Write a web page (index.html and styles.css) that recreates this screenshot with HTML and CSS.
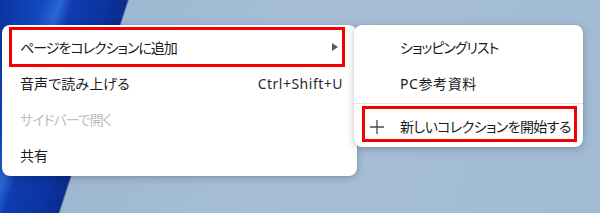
FILE: index.html
```html
<!DOCTYPE html>
<html lang="ja">
<head>
<meta charset="utf-8">
<link rel="stylesheet" href="styles.css">
</head>
<body>
<div class="stage">
  <div class="menu main">
    <div class="item hl-main">
      <span class="label kana">ページをコレクションに追加</span>
      <svg class="arrow" width="6" height="8" viewBox="0 0 6 8"><path d="M0 0 L6 4 L0 8 Z" fill="#5a5a5a"/></svg>
    </div>
    <div class="item">
      <span class="label">音声で読み上げる</span>
      <span class="shortcut">Ctrl+Shift+U</span>
    </div>
    <div class="item disabled">
      <span class="label kana">サイドバーで開く</span>
    </div>
    <div class="item">
      <span class="label">共有</span>
    </div>
  </div>
  <div class="menu sub">
    <div class="sitem">
      <span class="label kana">ショッピングリスト</span>
    </div>
    <div class="sitem">
      <span class="label wide">PC参考資料</span>
    </div>
    <div class="sep"></div>
    <div class="sitem hl-sub">
      <svg class="plus" width="16" height="16" viewBox="0 0 16 16"><path d="M8 1 V15 M1 8 H15" stroke="#4a4a4a" stroke-width="1.3" fill="none"/></svg>
      <span class="label semi">新しいコレクションを開始する</span>
    </div>
  </div>
</div>
</body>
</html>
```

FILE: styles.css
```css
html, body {
  margin: 0;
  padding: 0;
}
body {
  width: 600px;
  height: 213px;
  overflow: hidden;
  background: linear-gradient(108deg,
    #0a33a0 0px, #1248c0 40px, #2a66d6 58px, #0f3cae 70px,
    #0b35a4 100px, #0a2c8c 121px, #9fb8d2 123px, #a6bfd7 300px, #a2bbd4 100%);
  font-family: "Noto Sans", "Noto Sans CJK JP", sans-serif;
  font-size: 14px;
  color: #1b1b1b;
}
.stage {
  display: flex;
  align-items: flex-start;
  padding: 25px 0 0 2px;
}
.menu {
  background: #ffffff;
  border-radius: 8px;
  box-shadow: 0 2px 8px rgba(0, 0, 0, 0.22), 0 0 1px rgba(0, 0, 0, 0.25);
}
.main {
  width: 355px;
  padding: 4px 0 3px;
}
.sub {
  position: relative;
  z-index: 2;
  width: 229px;
  margin-left: -3px;
  padding: 4px 0 3px;
}
.label {
  font-feature-settings: "palt" 1;
  letter-spacing: 0.1px;
  white-space: nowrap;
}
.label.kana {
  letter-spacing: -1px;
}
.label.semi {
  letter-spacing: -0.6px;
}
.label.wide {
  letter-spacing: 0.6px;
}
.item {
  position: relative;
  height: 36px;
  display: flex;
  align-items: center;
  padding: 0 14px 0 18px;
}
.item .label {
  flex: 1;
}
.arrow {
  margin-right: 5px;
}
.shortcut {
  color: #2a2a2a;
  letter-spacing: 0.5px;
}
.disabled {
  color: #bdbdbd;
}
.sitem {
  position: relative;
  height: 36px;
  display: flex;
  align-items: center;
  padding-left: 46px;
}
.plus {
  position: absolute;
  left: 15px;
  top: 11px;
}
.sep {
  height: 1px;
  background: #e5e5e5;
  margin: 2px 0 4px;
}
.hl-main::after,
.hl-sub::after {
  content: "";
  position: absolute;
  border: 3px solid #f00000;
  pointer-events: none;
}
.hl-main::after {
  top: -2px;
  bottom: -2px;
  left: 7px;
  right: 12px;
}
.hl-sub::after {
  top: -2px;
  bottom: 2px;
  left: 8px;
  right: 6px;
}
```
